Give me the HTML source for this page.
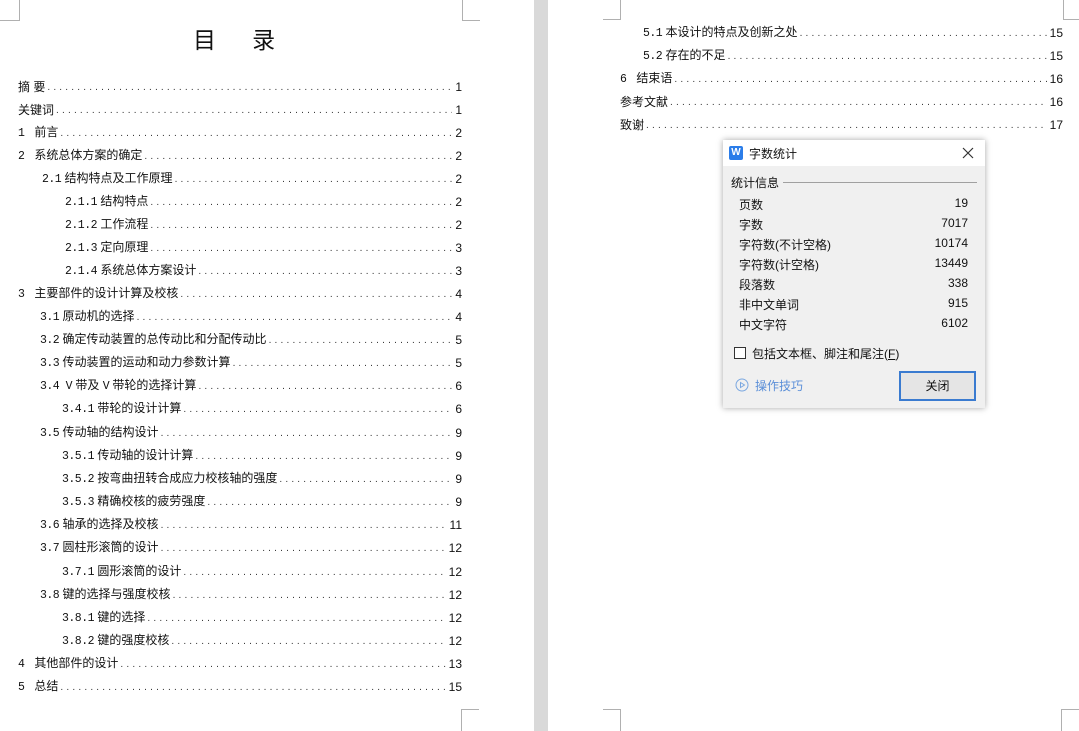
<!DOCTYPE html>
<html><head><meta charset="utf-8"><style>
*{margin:0;padding:0;box-sizing:border-box}
body{width:1079px;height:731px;overflow:hidden;background:#fff;position:relative;font-family:"Liberation Sans","Noto Sans CJK SC","WenQuanYi Zen Hei",sans-serif;color:#111}
.gut{position:absolute;left:534px;top:0;width:14px;height:731px;background:#d9d9d9}
.l{position:absolute;background:#b0b0b0}
.row{position:absolute;height:16px;display:flex;align-items:center;font-size:12px;line-height:16px;white-space:nowrap}
.row .t{flex:none}
.row .m{font-family:"Liberation Mono",monospace;font-size:11.5px;letter-spacing:-0.5px}
.row .d{flex:1;overflow:hidden;color:#333;letter-spacing:3.2px;font-size:10px;margin:0 3px 0 2px;position:relative;top:1px}
.row .n{flex:none;font-size:12px}
.title{position:absolute;top:21px;left:193px;font-size:23px;font-family:"Noto Sans CJK SC",sans-serif}
.dlg{position:absolute;left:723px;top:140px;width:262px;height:268px;background:#f0f0f0;box-shadow:0 0 6px rgba(0,0,0,.35);font-size:12px}
.dlg .tb{height:26px;background:#fff;position:relative}
.dlg .it{position:absolute;left:16px;font-size:12px}
.dlg .iv{position:absolute;right:17px;font-size:12px}
</style></head><body>
<div class="gut"></div>
<div class="l" style="left:19px;top:0;width:1px;height:20px"></div>
<div class="l" style="left:0;top:20px;width:20px;height:1px"></div>
<div class="l" style="left:462px;top:0;width:1px;height:20px"></div>
<div class="l" style="left:462px;top:20px;width:18px;height:1px"></div>
<div class="l" style="left:461px;top:709px;width:1px;height:22px"></div>
<div class="l" style="left:461px;top:709px;width:18px;height:1px"></div>
<div class="l" style="left:620px;top:0;width:1px;height:20px"></div>
<div class="l" style="left:603px;top:19px;width:18px;height:1px"></div>
<div class="l" style="left:1063px;top:0;width:1px;height:20px"></div>
<div class="l" style="left:1063px;top:19px;width:16px;height:1px"></div>
<div class="l" style="left:620px;top:709px;width:1px;height:22px"></div>
<div class="l" style="left:603px;top:709px;width:18px;height:1px"></div>
<div class="l" style="left:1061px;top:709px;width:1px;height:22px"></div>
<div class="l" style="left:1061px;top:709px;width:18px;height:1px"></div>

<div class="title">目&nbsp;&nbsp;&nbsp;&nbsp;&nbsp;&nbsp;&nbsp;录</div>

<div id="left"></div>
<div id="right"></div>

<div class="dlg">
 <div class="tb">
  <div style="position:absolute;left:6px;top:6px;width:14px;height:14px;background:#2b7de9;border-radius:2px;color:#fff;font-size:10px;font-weight:bold;line-height:14px;text-align:center">W</div>
  <div style="position:absolute;left:26px;top:5px;font-size:12px">字数统计</div>
  <svg style="position:absolute;right:11px;top:7px" width="12" height="12"><path d="M1 1L11 11M11 1L1 11" stroke="#333" stroke-width="1.2"/></svg>
 </div>
 <div style="position:absolute;left:8px;top:34px">统计信息</div>
 <div style="position:absolute;left:60px;right:8px;top:42px;height:1px;background:#a0a0a0"></div>
 <div class="it" style="top:56px">页数</div><div class="iv" style="top:56px">19</div>
 <div class="it" style="top:76px">字数</div><div class="iv" style="top:76px">7017</div>
 <div class="it" style="top:96px">字符数(不计空格)</div><div class="iv" style="top:96px">10174</div>
 <div class="it" style="top:116px">字符数(计空格)</div><div class="iv" style="top:116px">13449</div>
 <div class="it" style="top:136px">段落数</div><div class="iv" style="top:136px">338</div>
 <div class="it" style="top:156px">非中文单词</div><div class="iv" style="top:156px">915</div>
 <div class="it" style="top:176px">中文字符</div><div class="iv" style="top:176px">6102</div>
 <div style="position:absolute;left:11px;top:207px;width:12px;height:12px;border:1px solid #333;background:#fff"></div>
 <div style="position:absolute;left:29px;top:205px">包括文本框、脚注和尾注(<u>F</u>)</div>
 <svg style="position:absolute;left:12px;top:238px" width="14" height="14"><circle cx="7" cy="7" r="6" fill="none" stroke="#7aa7e0"/><path d="M5.5 4.5L9.5 7L5.5 9.5Z" fill="none" stroke="#7aa7e0"/></svg>
 <div style="position:absolute;left:32px;top:237px;color:#5b8fd8">操作技巧</div>
 <div style="position:absolute;left:176px;top:231px;width:77px;height:30px;border:2px solid #3a7bd0;background:#e5e5e5;text-align:center;line-height:26px">关闭</div>
</div>

<script>
var L=[
[18,86,"摘 要","1"],[18,109,"关键词","1"],[18,132,"<span class=m>1</span>&nbsp;&nbsp;&nbsp;前言","2"],[18,155,"<span class=m>2</span>&nbsp;&nbsp;&nbsp;系统总体方案的确定","2"],
[42,178,"<span class=m>2.1</span> 结构特点及工作原理","2"],[65,201,"<span class=m>2.1.1</span> 结构特点","2"],[65,224,"<span class=m>2.1.2</span> 工作流程","2"],[65,247,"<span class=m>2.1.3</span> 定向原理","3"],[65,270,"<span class=m>2.1.4</span> 系统总体方案设计","3"],
[18,293,"<span class=m>3</span>&nbsp;&nbsp;&nbsp;主要部件的设计计算及校核","4"],[40,316,"<span class=m>3.1</span> 原动机的选择","4"],[40,339,"<span class=m>3.2</span> 确定传动装置的总传动比和分配传动比","5"],[40,362,"<span class=m>3.3</span> 传动装置的运动和动力参数计算","5"],[40,385,"<span class=m>3.4 V</span> 带及 <span class=m>V</span> 带轮的选择计算","6"],
[62,408,"<span class=m>3.4.1</span> 带轮的设计计算","6"],[40,432,"<span class=m>3.5</span> 传动轴的结构设计","9"],[62,455,"<span class=m>3.5.1</span> 传动轴的设计计算","9"],[62,478,"<span class=m>3.5.2</span> 按弯曲扭转合成应力校核轴的强度","9"],[62,501,"<span class=m>3.5.3</span> 精确校核的疲劳强度","9"],
[40,524,"<span class=m>3.6</span> 轴承的选择及校核","11"],[40,547,"<span class=m>3.7</span> 圆柱形滚筒的设计","12"],[62,571,"<span class=m>3.7.1</span> 圆形滚筒的设计","12"],[40,594,"<span class=m>3.8</span> 键的选择与强度校核","12"],[62,617,"<span class=m>3.8.1</span> 键的选择","12"],[62,640,"<span class=m>3.8.2</span> 键的强度校核","12"],
[18,663,"<span class=m>4</span>&nbsp;&nbsp;&nbsp;其他部件的设计","13"],[18,686,"<span class=m>5</span>&nbsp;&nbsp;&nbsp;总结","15"]];
var R=[[643,32,"<span class=m>5.1</span> 本设计的特点及创新之处","15"],[643,55,"<span class=m>5.2</span> 存在的不足","15"],[620,78,"<span class=m>6</span>&nbsp;&nbsp;&nbsp;结束语","16"],[620,101,"参考文献","16"],[620,124,"致谢","17"]];
var dots=new Array(200).join(".");
function put(arr,right,id){var h="";arr.forEach(function(e){h+='<div class="row" style="left:'+e[0]+'px;top:'+(e[1]-7)+'px;width:'+(right-e[0])+'px"><span class="t">'+e[2]+'</span><span class="d">'+dots+'</span><span class="n">'+e[3]+'</span></div>'});document.getElementById(id).innerHTML=h;}
put(L,462,"left");put(R,1063,"right");
</script>
</body></html>
